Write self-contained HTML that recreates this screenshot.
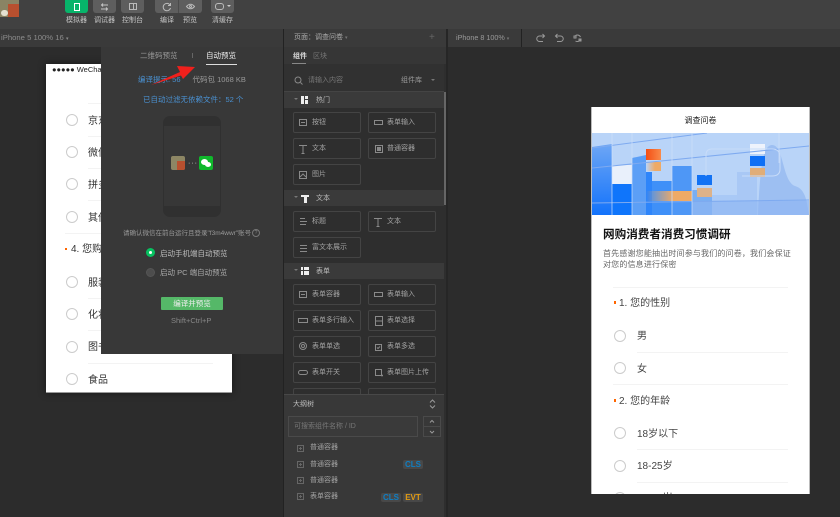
<!DOCTYPE html>
<html lang="zh"><head><meta charset="utf-8"><style>
html,body{margin:0;padding:0;background:#2c2c2c}
#p{position:relative;width:840px;height:517px;overflow:hidden;background:#2c2c2c;font-family:"Liberation Sans","Noto Sans CJK SC",sans-serif;color:#aaa;filter:blur(.3px)}
#p div,#p span.a{position:absolute;box-sizing:border-box;white-space:nowrap}
.btn{top:0;height:13px;background:#5e5e5e;border-radius:0 0 3px 3px}
.tl{top:16px;font-size:7px;color:#c4c4c4;line-height:10px;text-align:center}
.c{width:68px;height:21px;border:1px solid #444;border-radius:2px;font-size:7px;line-height:20px;color:#a2a2a2;padding-left:18px}
.sec{left:284px;width:160px;height:16px;background:#3a3a3a;font-size:7px;line-height:17px;color:#bbb;padding-left:32px}
.tri{width:0;height:0;border:2px solid transparent;border-top:2.500px solid #777}
.r{width:12px;height:12px;border:1px solid #ccc;border-radius:50%;background:#fff}
.o{font-size:10px;color:#333;line-height:14px}
.ln{height:1px;background:#f3f3f3}
.tag{height:9px;background:#484848;border-radius:2px;font-size:8px;font-weight:bold;line-height:9px;text-align:center}
.tr{font-size:7px;color:#a2a2a2;line-height:10px}
.pl{width:7px;height:7px;border:1px solid #666;background:linear-gradient(#666,#666) center/3px 1px no-repeat,linear-gradient(#666,#666) center/1px 3px no-repeat}
svg{position:absolute;overflow:visible}
</style></head><body><div id="p">

<!-- top bars -->
<div style="left:0;top:0;width:840px;height:29px;background:#414141"></div>
<div style="left:0;top:29px;width:840px;height:18px;background:#3a3a3a"></div>
<div style="left:0;top:0;width:19px;height:17px;background:#8a8464;overflow:hidden">
  <div style="left:8px;top:4px;width:11px;height:13px;background:#b8502f"></div>
  <div style="left:1px;top:10px;width:7px;height:6px;background:#e4e0d0;border-radius:3px"></div>
</div>
<div class="btn" style="left:65px;width:23px;background:#07b46a"></div>
<div style="left:74px;top:3px;width:6px;height:8px;border:1px solid #fff"></div>
<div class="btn" style="left:93px;width:23px"></div>
<svg style="left:100px;top:3px" width="9" height="8" fill="none" stroke="#c4c4c4"><path d="M8 2H2M3 .500 1.500 2 3 3.500M1 6H7M6 4.500 7.500 6 6 7.500"/></svg>
<div class="btn" style="left:121px;width:23px"></div>
<div style="left:129px;top:3px;width:8px;height:7px;border:1px solid #bbb"></div>
<div style="left:132.500px;top:3px;width:1px;height:7px;background:#bbb"></div>
<div class="btn" style="left:155px;width:47px"></div>
<div style="left:178px;top:0;width:1px;height:13px;background:#4b4b4b"></div>
<svg style="left:162px;top:3px" width="10" height="9" fill="none" stroke="#bbb"><path d="M8 2A3.700 3.700 0 1 0 8.500 5M6 2.500h2.500V0"/></svg>
<svg style="left:186px;top:3px" width="10" height="7" fill="none" stroke="#bbb"><path d="M.500 3.500C3 .500 6 .500 8.500 3.500 6 6.500 3 6.500.500 3.500Z"/><circle cx="4.500" cy="3.500" r="1"/></svg>
<div class="btn" style="left:211px;width:23px"></div>
<div style="left:215px;top:3px;width:9px;height:7px;border:1px solid #bbb;border-radius:3px"></div>
<div style="left:227px;top:5px;width:0;height:0;border:2px solid transparent;border-top:2.500px solid #ccc"></div>
<div class="tl" style="left:61.500px;width:30px">模拟器</div>
<div class="tl" style="left:89.500px;width:30px">调试器</div>
<div class="tl" style="left:117.500px;width:30px">控制台</div>
<div class="tl" style="left:155px;width:24px">编译</div>
<div class="tl" style="left:178px;width:24px">预览</div>
<div class="tl" style="left:207.500px;width:30px">清缓存</div>

<div style="left:1px;top:32px;font-size:7.700px;line-height:12px;color:#8c8c8c">iPhone 5 100% 16 <span style="font-size:5px">▾</span></div>
<div style="left:283px;top:29px;width:1px;height:488px;background:#222"></div>
<div style="left:446px;top:29px;width:2px;height:488px;background:#262626"></div>
<div style="left:456px;top:32px;font-size:7.200px;line-height:12px;color:#999">iPhone 8 100% <span style="font-size:5px;color:#777">▾</span></div>
<div style="left:521px;top:29px;width:1px;height:18px;background:#222"></div>
<svg style="left:536px;top:33px" width="60" height="12" fill="none" stroke="#999" stroke-width="1">
 <path d="M8 3H3.500a2 2 0 0 0 0 5.500H7M6.500 1 8.500 3 6.500 5"/>
 <path d="M20 3h4.500a2 2 0 0 1 0 5.500H21M21.500 1 19.500 3 21.500 5"/>
 <path d="M39.500 2.500a3.500 3.500 0 0 1 5 1.500M44.500 6.500a3.500 3.500 0 0 1-5 1.500"/><rect x="38" y="3" width="2" height="2"/><rect x="43" y="6" width="2" height="2"/>
</svg>

<!-- simulator phone -->
<div style="left:46px;top:64px;width:186px;height:329px;background:#fff;box-shadow:0 0 8px rgba(0,0,0,.45);border-bottom:1px solid #999"></div>
<div style="left:52px;top:65px;font-size:7.500px;line-height:10px;color:#222">●●●●● WeChat</div>
<div class="ln" style="left:88px;top:103px;width:130px"></div>
<div class="r" style="left:66px;top:114px"></div><div class="o" style="left:88px;top:115px">京东</div>
<div class="ln" style="left:88px;top:136px;width:130px"></div>
<div class="r" style="left:66px;top:146px"></div><div class="o" style="left:88px;top:147px">微信</div>
<div class="ln" style="left:88px;top:168px;width:130px"></div>
<div class="r" style="left:66px;top:178px"></div><div class="o" style="left:88px;top:179px">拼多</div>
<div class="ln" style="left:88px;top:200px;width:130px"></div>
<div class="r" style="left:66px;top:211px"></div><div class="o" style="left:88px;top:212px">其他</div>
<div class="ln" style="left:65px;top:233px;width:150px"></div>
<div style="left:65px;top:248px;width:2px;height:2px;background:#f60"></div>
<div class="o" style="left:71px;top:243px">4. 您购买</div>
<div class="r" style="left:66px;top:276px"></div><div class="o" style="left:88px;top:277px">服装</div>
<div class="ln" style="left:88px;top:298px;width:130px"></div>
<div class="r" style="left:66px;top:308px"></div><div class="o" style="left:88px;top:309px">化妆</div>
<div class="ln" style="left:88px;top:330px;width:130px"></div>
<div class="r" style="left:66px;top:341px"></div><div class="o" style="left:88px;top:341px">图书</div>
<div class="ln" style="left:88px;top:363px;width:125px"></div>
<div class="r" style="left:66px;top:373px"></div><div class="o" style="left:88px;top:374px">食品</div>

<!-- popup -->
<div style="left:101px;top:47px;width:182px;height:307px;background:#383838"></div>
<div style="left:140px;top:50px;font-size:7.500px;line-height:12px;color:#999">二维码预览</div>
<div style="left:192px;top:53px;width:1px;height:5px;background:#666"></div>
<div style="left:206px;top:50px;font-size:7.500px;line-height:12px;color:#eee">自动预览</div>
<div style="left:206px;top:64px;width:31px;height:1px;background:#ddd"></div>
<div style="left:138px;top:74px;font-size:7.500px;line-height:12px;color:#4a90d0">编译提示: 56</div>
<div style="left:192.500px;top:74px;font-size:7.500px;line-height:12px;color:#999">代码包 1068 KB</div>
<div style="left:143px;top:94px;font-size:7.500px;line-height:12px;color:#4a90d0">已自动过滤无依赖文件：52 个</div>
<svg style="left:150px;top:64px" width="50" height="24"><polygon points="1,21 30,8 27,2 45,3 33,15 31,11.500" fill="#f0201c"/></svg>
<div style="left:163px;top:116px;width:58px;height:101px;background:#303030;border-radius:7px"></div>
<div style="left:164px;top:126px;width:56px;height:80px;background:#373737"></div>
<div style="left:171px;top:156px;width:14px;height:14px;background:#8d8664;border-radius:2px;overflow:hidden"><div style="left:6px;top:5px;width:8px;height:9px;background:#b8502f"></div></div>
<div style="left:188px;top:160px;font-size:7px;line-height:7px;color:#ddd;letter-spacing:1px">···</div>
<div style="left:199px;top:156px;width:14px;height:14px;background:#10b82c;border-radius:2px"></div>
<div style="left:201px;top:159px;width:7px;height:6px;background:#fff;border-radius:50%"></div>
<div style="left:205px;top:162px;width:6px;height:5px;background:#fff;border-radius:50%"></div>
<div style="left:123px;top:228px;font-size:6.500px;line-height:11px;color:#999">请确认微信在前台运行且登录"f3m4wwr"账号</div>
<div style="left:252px;top:229px;width:8px;height:8px;border:1px solid #777;border-radius:50%;font-size:5px;line-height:6px;text-align:center;color:#888">?</div>
<div style="left:146px;top:248px;width:9px;height:9px;border-radius:50%;background:#07c160"></div>
<div style="left:149px;top:251px;width:3px;height:3px;border-radius:50%;background:#fff"></div>
<div style="left:160px;top:248px;font-size:7.500px;line-height:11px;color:#bbb">启动手机端自动预览</div>
<div style="left:146px;top:268px;width:9px;height:9px;border-radius:50%;background:#4d4d4d;border:1px solid #555"></div>
<div style="left:160px;top:267px;font-size:7.500px;line-height:11px;color:#aaa">启动 PC 端自动预览</div>
<div style="left:161px;top:297px;width:62px;height:13px;background:#55b868;border-radius:1px;font-size:7.500px;line-height:13px;text-align:center;color:#eee">编译并预览</div>
<div style="left:171px;top:315px;font-size:7.500px;line-height:11px;color:#888">Shift+Ctrl+P</div>

<!-- middle panel -->
<div style="left:284px;top:47px;width:162px;height:470px;background:#2e2e2e"></div>
<div style="left:284px;top:29px;width:162px;height:18px;background:#3a3a3a"></div>
<div style="left:294px;top:32px;font-size:7px;line-height:12px;color:#aaa">页面：调查问卷 <span style="font-size:5px;color:#777">▾</span></div>
<div style="left:429px;top:32px;font-size:10px;line-height:12px;color:#666">+</div>
<div style="left:284px;top:47px;width:162px;height:17px;background:#363636"></div>
<div style="left:293px;top:51px;font-size:7px;line-height:11px;color:#ddd;font-weight:bold">组件</div>
<div style="left:313px;top:51px;font-size:7px;line-height:11px;color:#777">区块</div>
<div style="left:292px;top:63px;width:14px;height:1px;background:#888"></div>
<div style="left:284px;top:64px;width:160px;height:27px;background:#313131"></div>
<svg style="left:293px;top:75px" width="11" height="11" fill="none" stroke="#888"><circle cx="5" cy="5" r="3"/><path d="M7.500 7.500 9.500 9.500"/></svg>
<div style="left:308px;top:75px;font-size:7px;line-height:11px;color:#777">请输入内容</div>
<div style="left:401px;top:75px;font-size:7px;line-height:11px;color:#999">组件库</div>
<div class="tri" style="left:431px;top:79px"></div>
<div style="left:284px;top:91px;width:160px;height:1px;background:#444"></div>

<div class="sec" style="top:92px">热门</div>
<div class="sec" style="top:190px">文本</div>
<div class="sec" style="top:263px">表单</div>
<div class="tri" style="left:294px;top:98px"></div>
<div class="tri" style="left:294px;top:196px"></div>
<div class="tri" style="left:294px;top:269px"></div>
<div style="left:301px;top:96px;width:3px;height:8px;background:#eee"></div>
<div style="left:305px;top:96px;width:3px;height:3px;background:#eee"></div>
<div style="left:305px;top:100px;width:3px;height:4px;background:#eee"></div>
<div style="left:301px;top:195px;width:8px;height:2px;background:#eee"></div><div style="left:303.500px;top:197px;width:3px;height:6px;background:#eee"></div>
<div style="left:301px;top:267px;width:8px;height:8px;background:#eee"></div>
<div style="left:301px;top:270px;width:8px;height:1px;background:#3a3a3a"></div>
<div style="left:303px;top:267px;width:1px;height:8px;background:#3a3a3a"></div>
<div style="left:443.500px;top:92px;width:2px;height:113px;background:#666"></div>

<div class="c" style="left:293px;top:112px">按钮</div><div class="c" style="left:368px;top:112px">表单输入</div>
<div class="c" style="left:293px;top:138px">文本</div><div class="c" style="left:368px;top:138px">普通容器</div>
<div class="c" style="left:293px;top:164px">图片</div>
<div class="c" style="left:293px;top:211px">标题</div><div class="c" style="left:368px;top:211px">文本</div>
<div class="c" style="left:293px;top:237px">富文本展示</div>
<div class="c" style="left:293px;top:284px">表单容器</div><div class="c" style="left:368px;top:284px">表单输入</div>
<div class="c" style="left:293px;top:310px">表单多行输入</div><div class="c" style="left:368px;top:310px">表单选择</div>
<div class="c" style="left:293px;top:336px">表单单选</div><div class="c" style="left:368px;top:336px">表单多选</div>
<div class="c" style="left:293px;top:362px">表单开关</div><div class="c" style="left:368px;top:362px">表单图片上传</div>
<div class="c" style="left:293px;top:388px"></div><div class="c" style="left:368px;top:388px"></div>

<svg style="left:284px;top:102px" width="162" height="290" fill="none" stroke="#8a8a8a" stroke-width="1">
 <rect x="15.500" y="17.500" width="7" height="6"/><path d="M17 20.500h4"/>
 <rect x="90.500" y="18.500" width="8" height="4"/>
 <path d="M15 43.500h8M19 43.500v8M17.500 51.500h3"/>
 <rect x="91.500" y="43.500" width="7" height="7"/><rect x="93.500" y="45.500" width="3" height="3" fill="#8a8a8a"/>
 <rect x="15.500" y="69.500" width="7" height="7"/><path d="M16 75l3-3 3 3"/>
 <path d="M16 116.500h5M16 119.500h7M16 122.500h6"/>
 <path d="M90 116.500h8M94 116.500v8M92.500 124.500h3"/>
 <path d="M16 143.500h7M16 146.500h7M16 149.500h7"/>
 <rect x="15.500" y="189.500" width="7" height="6"/><path d="M17 192.500h4"/>
 <rect x="90.500" y="190.500" width="8" height="4"/>
 <rect x="14.500" y="216.500" width="9" height="4"/>
 <rect x="91.500" y="214.500" width="7" height="9"/><path d="M92 219h6"/>
 <circle cx="19" cy="244" r="3.500"/><circle cx="19" cy="244" r="1.500"/>
 <rect x="91.500" y="242.500" width="6" height="6"/><path d="M93 245.500l1 1 2-2"/>
 <rect x="14.500" y="268.500" width="9" height="4" rx="2"/>
 <rect x="91.500" y="267.500" width="6" height="6"/><path d="M97 273.500h2M98 272.500v2"/>
</svg>

<!-- outline -->
<div style="left:284px;top:394px;width:160px;height:123px;background:#383838;border-top:1px solid #484848"></div>
<div style="left:293px;top:399px;font-size:7px;line-height:12px;color:#bbb">大纲树</div>
<svg style="left:429px;top:399px" width="7" height="10" fill="none" stroke="#999"><path d="M1 3.500 3.500 1 6 3.500M1 6.500 3.500 9 6 6.500"/></svg>
<div style="left:288px;top:416px;width:130px;height:21px;background:#3a3a3a;border:1px solid #4a4a4a;font-size:7px;line-height:19px;color:#777;padding-left:5px">可搜索组件名称 / ID</div>
<div style="left:423px;top:416px;width:18px;height:21px;border:1px solid #4a4a4a"></div>
<div style="left:423px;top:426px;width:18px;height:1px;background:#4a4a4a"></div>
<svg style="left:423px;top:416px" width="18" height="21" fill="none" stroke="#999"><path d="M7 6.500 9 4.500 11 6.500M7 15 9 17 11 15"/></svg>
<div class="pl" style="left:297px;top:445px"></div><div class="tr" style="left:310px;top:443px">普通容器</div>
<div class="pl" style="left:297px;top:461px"></div><div class="tr" style="left:310px;top:460px">普通容器</div>
<div class="pl" style="left:297px;top:477px"></div><div class="tr" style="left:310px;top:476px">普通容器</div>
<div class="pl" style="left:297px;top:493px"></div><div class="tr" style="left:310px;top:492px">表单容器</div>
<div class="tag" style="left:403px;top:460px;width:20px;color:#0f7fc4">CLS</div>
<div class="tag" style="left:381px;top:493px;width:20px;color:#0f7fc4">CLS</div>
<div class="tag" style="left:403px;top:493px;width:20px;color:#e09a12">EVT</div>

<!-- right phone -->
<div style="left:591px;top:107px;width:219px;height:387px;background:#fff;border-left:1px solid #bbb;border-right:1px solid #bbb;overflow:hidden"></div>
<div style="left:591px;top:114px;width:219px;text-align:center;font-size:8px;line-height:14px;color:#222">调查问卷</div>
<svg style="left:592px;top:133px;overflow:hidden" width="217" height="82">
 <defs>
  <linearGradient id="g1" x1="0" y1="0" x2="0" y2="1"><stop offset="0" stop-color="#6da6f5"/><stop offset="1" stop-color="#1272fb"/></linearGradient>
  <linearGradient id="g2" x1="0" y1="0" x2="1" y2="0"><stop offset="0" stop-color="#eeaa66" stop-opacity="0"/><stop offset=".6" stop-color="#eeaa66"/></linearGradient>
  <linearGradient id="g3" x1="0" y1="0" x2="1" y2="0"><stop offset="0" stop-color="#f44e14"/><stop offset="1" stop-color="#f98a4a"/></linearGradient>
 </defs>
 <rect width="217" height="82" fill="#b9d4f8"/>
 <path d="M0 14 20 11V82H0Z" fill="url(#g1)"/>
 <path d="M20 32H40V52H20Z" fill="#e9f0fb"/>
 <path d="M20 51H40V82H20Z" fill="#0f75fb"/>
 <path d="M40 25 54 22V82H40Z" fill="#5c9ff6"/>
 <path d="M54 39H60V82H54Z" fill="#2e85fa"/>
 <path d="M60 48H80V82H60Z" fill="#3f90f8"/>
 <path d="M80 33H100V82H80Z" fill="#4e97f6"/>
 <path d="M100 57H120V82H100Z" fill="#7aaef2"/>
 <path d="M120 62H145V82H120Z" fill="#a9c9f6"/>
 <path d="M145 39H165V82H145Z" fill="#a9c8f5"/>
 <path d="M166 82C168 40 170 12 180 12C192 12 190 48 203 53C214 56 215 70 217 82Z" fill="#9dbff2"/>
 <path d="M100 68H217V82H100Z" fill="#8db5f3" opacity=".6"/>
 <rect x="54" y="16" width="15" height="11" fill="url(#g3)"/>
 <rect x="54" y="29" width="15" height="9" fill="url(#g2)"/>
 <rect x="54" y="58" width="46" height="10" fill="url(#g2)"/>
 <rect x="105" y="42" width="15" height="10" fill="#1272f4"/>
 <rect x="105" y="55" width="15" height="9" fill="#ddb289"/>
 <rect x="158" y="11" width="15" height="10" fill="#eef3fc"/>
 <rect x="158" y="23" width="15" height="10" fill="#0e6ff5"/>
 <rect x="158" y="35" width="15" height="9" fill="#e0ad78"/>
 <path d="M0 15 115 0M0 35 217 13M0 70 217 67" stroke="#7eaaf0" fill="none"/>
 <path d="M20 0V82M40 0V82M80 0V82M100 0V82M187 0V30" stroke="#cfe0fa" stroke-opacity=".7" fill="none"/>
 <path d="M114 43V22Q114 16 120 16H180Q188 16 188 24V36Q188 43 180 43H150" stroke="#c8dcf9" fill="none"/>
</svg>
<div style="left:603px;top:227px;font-size:11.600px;font-weight:bold;line-height:16px;color:#111">网购消费者消费习惯调研</div>
<div style="left:603px;top:248px;font-size:8px;line-height:11px;color:#666;letter-spacing:.17px">首先感谢您能抽出时间参与我们的问卷，我们会保证</div>
<div style="left:603px;top:259px;font-size:8px;line-height:11px;color:#666;letter-spacing:.17px">对您的信息进行保密</div>
<div class="ln" style="left:613px;top:287px;width:175px"></div>
<div style="left:614px;top:301px;width:2px;height:3px;background:#f60"></div>
<div class="o" style="left:619px;top:297px;color:#444">1. 您的性别</div>
<div class="r" style="left:614px;top:330px"></div><div class="o" style="left:637px;top:330px;color:#444">男</div>
<div class="ln" style="left:637px;top:352px;width:151px"></div>
<div class="r" style="left:614px;top:362px"></div><div class="o" style="left:637px;top:363px;color:#444">女</div>
<div class="ln" style="left:613px;top:384px;width:175px"></div>
<div style="left:614px;top:399px;width:2px;height:3px;background:#f60"></div>
<div class="o" style="left:619px;top:395px;color:#444">2. 您的年龄</div>
<div class="r" style="left:614px;top:427px"></div><div class="o" style="left:637px;top:428px;color:#444">18岁以下</div>
<div class="ln" style="left:637px;top:449px;width:151px"></div>
<div class="r" style="left:614px;top:460px"></div><div class="o" style="left:637px;top:460px;color:#444">18-25岁</div>
<div class="ln" style="left:637px;top:482px;width:151px"></div>
<div class="r" style="left:614px;top:492px"></div><div class="o" style="left:637px;top:492px;color:#444">26-30岁</div>
<div style="left:591px;top:494px;width:219px;height:23px;background:#2c2c2c"></div>
</div></body></html>
